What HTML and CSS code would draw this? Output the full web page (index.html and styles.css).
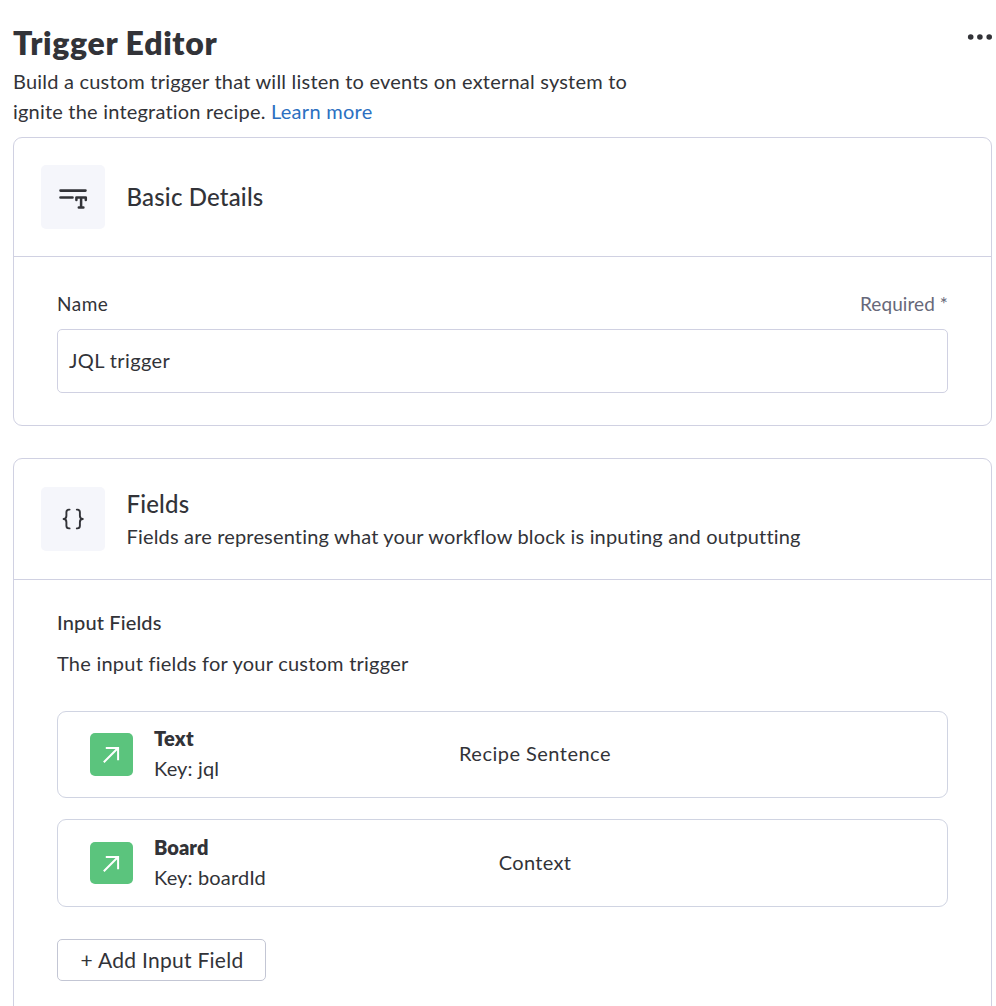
FILE: index.html
```html
<!DOCTYPE html>
<html lang="en">
<head>
<meta charset="utf-8">
<title>Trigger Editor</title>
<link rel="stylesheet" href="styles.css">
</head>
<body>
<main class="page">
  <header class="page-header">
    <div class="intro">
      <h1 class="title"><span>Trigger Editor</span></h1>
      <p class="lead"><span class="lead-first">Build a custom trigger that will listen to events on external system to</span><br><span class="lead-second">ignite the integration recipe. <a class="link" href="#">Learn more</a></span></p>
    </div>
    <button class="menu" aria-label="More options">
      <svg width="26" height="8" viewBox="0 0 26 8" fill="currentColor"><circle cx="3.7" cy="4" r="2.8"/><circle cx="12.9" cy="4" r="2.8"/><circle cx="22.2" cy="4" r="2.8"/></svg>
    </button>
  </header>

  <section class="card">
    <div class="card-header">
      <div class="tile">
        <svg width="64" height="64" viewBox="0 0 64 64" fill="none" stroke="currentColor" stroke-width="2.6" stroke-linecap="round" stroke-linejoin="round"><path d="M19.5 25.6H44.5M19.5 32.5H31.5"/><path stroke-width="2.5" d="M35.4 35V32.6H44.8V35M40.1 32.6V42.4M37.8 42.5H42.4"/></svg>
      </div>
      <h2 class="heading heading-basic"><span>Basic Details</span></h2>
    </div>
    <div class="form">
      <div class="label-row">
        <label class="label" for="name">Name</label>
        <span class="required">Required *</span>
      </div>
      <div class="input" id="name"><span class="value">JQL trigger</span></div>
    </div>
  </section>

  <section class="card card-fields">
    <div class="card-header card-header-tall">
      <div class="tile">
        <svg width="64" height="64" viewBox="0 0 64 64" fill="none" stroke="currentColor" stroke-width="1.9" stroke-linecap="round" stroke-linejoin="round"><path d="M28.6 22.6H28C26 22.6 25.4 23.6 25.4 25.2V28.8C25.4 30.8 24.6 32 22.6 32C24.6 32 25.4 33.2 25.4 35.2V38.8C25.4 40.4 26 41.4 28 41.4H28.6M35.8 22.6H36.4C38.3 22.6 38.9 23.6 38.9 25.2V28.8C38.9 30.8 39.8 32 41.8 32C39.8 32 38.9 33.2 38.9 35.2V38.8C38.9 40.4 38.3 41.4 36.4 41.4H35.8"/></svg>
      </div>
      <div class="heading-group">
        <h2 class="heading heading-fields"><span>Fields</span></h2>
        <p class="subheading"><span>Fields are representing what your workflow block is inputing and outputting</span></p>
      </div>
    </div>
    <div class="fields">
      <h3 class="group-title"><span>Input Fields</span></h3>
      <p class="group-text"><span>The input fields for your custom trigger</span></p>
      <div class="rows">
        <div class="row">
          <div class="badge"><svg width="43" height="43" viewBox="0 0 43 43" fill="none" stroke="currentColor" stroke-width="2"><path d="M13.8 29.2L28 15M15.8 15H28.1V27.3"/></svg></div>
          <div class="details"><strong class="name name-text">Text</strong><span class="key key-jql">Key: jql</span></div>
          <div class="source"><span class="source-recipe">Recipe Sentence</span></div>
        </div>
        <div class="row row-board">
          <div class="badge"><svg width="43" height="43" viewBox="0 0 43 43" fill="none" stroke="currentColor" stroke-width="2"><path d="M13.8 29.2L28 15M15.8 15H28.1V27.3"/></svg></div>
          <div class="details"><strong class="name name-board">Board</strong><span class="key key-board">Key: boardId</span></div>
          <div class="source"><span class="source-context">Context</span></div>
        </div>
      </div>
      <button class="add"><span>+ Add Input Field</span></button>
    </div>
  </section>
</main>
</body>
</html>
```
FILE: styles.css
```css
* { box-sizing: border-box; }
body { margin: 0; background: #fff; color: #323338; font: 400 20px/30px Lato, "Open Sans", sans-serif; font-variant-ligatures: none; }
h1, h2, h3, p { margin: 0; }
button { font: inherit; color: inherit; background: #fff; }
.page { height: 1006px; overflow: hidden; padding: 23px 4px 0 13px; white-space: nowrap; }
.page-header { height: 114px; display: flex; justify-content: space-between; }
.title { font-size: 32px; font-weight: 800; line-height: 40px; margin-bottom: 3px; letter-spacing: 0.65px; }
.lead-first { letter-spacing: 0.21px; }
.lead-second { letter-spacing: 0.2px; }
.link { color: #2b70c1; text-decoration: none; letter-spacing: 0.27px; }
.menu { align-self: flex-start; border: 0; padding: 0; margin-top: 10px; width: 26px; height: 8px; margin-right: -1px; }
svg { display: block; }
.card { border: 1px solid #d0d1e2; border-radius: 9px; height: 289px; }
.card-header { height: 119px; border-bottom: 1px solid #d0d1e2; padding-left: 27px; display: flex; align-items: center; gap: 21.5px; }
.card-header-tall { height: 121px; }
.tile { width: 64px; height: 64px; border-radius: 5px; background: #f5f6fb; }
.heading { font-size: 24px; font-weight: 500; line-height: 32px; letter-spacing: 0.18px; }
.heading-group .heading { line-height: 30px; padding-bottom: 2px; }
.subheading { letter-spacing: 0.17px; }
.heading-group { padding-top: 1px; }
.form { padding: 31px 43px 0; }
.label-row { display: flex; justify-content: space-between; height: 41px; font-size: 19px; line-height: 31px; }
.label { letter-spacing: 0.5px; }
.required { color: #676879; letter-spacing: 0.08px; }
.input { height: 64px; border: 1px solid #d0d1e2; border-radius: 5px; padding: 0 11px; line-height: 60px; letter-spacing: 0.38px; }
.card-fields { margin-top: 32px; height: 590px; }
.fields { padding: 27px 43px 0; }
.group-title { font-size: 20px; font-weight: 500; line-height: 30px; letter-spacing: 0.14px; }
.group-text { margin-top: 11px; letter-spacing: 0.23px; }
.rows { display: grid; gap: 21px; margin-top: 33px; }
.row { height: 87px; border: 1px solid #d0d4e2; border-radius: 9px; padding-left: 32px; display: grid; grid-template-columns: 43px 241px 238px; column-gap: 21px; align-items: center; }
.row-board { height: 88px; }
.badge { width: 43px; height: 43px; border-radius: 5px; background: #5bc47d; color: #fff; }
.row-board .badge { height: 42px; overflow: hidden; }
.details { display: grid; margin-top: -3px; justify-items: start; }
.name { font-weight: 800; letter-spacing: 0.05px; }
.name-text { letter-spacing: 0.2px; }
.key { letter-spacing: 0.15px; }
.source { text-align: center; letter-spacing: 0.48px; margin-top: -3px; }
.row-board .source { letter-spacing: 0.34px; }
.add { display: block; margin-top: 32px; width: 209px; height: 42px; border: 1px solid #c3c6d4; border-radius: 5px; padding: 0 0 1px 1px; font-size: 21px; line-height: 39px; letter-spacing: 0.28px; }
```
